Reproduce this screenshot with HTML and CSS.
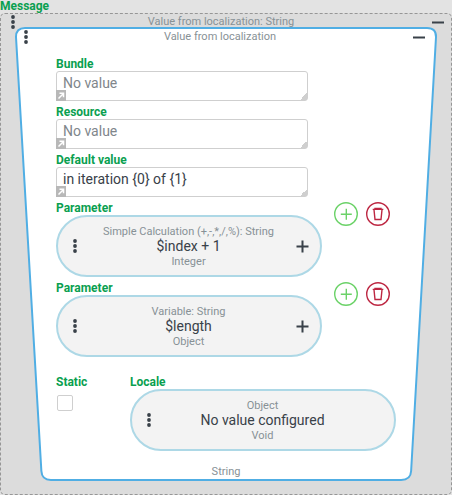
FILE: index.html
```html
<!DOCTYPE html>
<html lang="en">
<head>
    <meta charset="UTF-8">
    <meta name="viewport" content="width=device-width, initial-scale=1.0">
    <title>Message</title>
    <link rel="stylesheet" href="styles.css">
</head>
<body>

    <!-- Shared icons -->
    <svg class="sprite" aria-hidden="true">
        <symbol id="dots" viewBox="0 0 4 14">
            <circle cx="2" cy="2" r="1.9"/>
            <circle cx="2" cy="7" r="1.9"/>
            <circle cx="2" cy="12" r="1.9"/>
        </symbol>
        <symbol id="minus" viewBox="0 0 14 14">
            <path d="M1 7.500h12"/>
        </symbol>
        <symbol id="plus" viewBox="0 0 14 14">
            <path d="M1.500 7.500h12M7.500 1.500v12"/>
        </symbol>
        <symbol id="add" viewBox="0 0 24 24">
            <circle cx="12" cy="12" r="11.3"/>
            <path d="M12.300 6.700v11M6.800 12.200h11"/>
        </symbol>
        <symbol id="trash" viewBox="0 0 24 24">
            <circle cx="12" cy="12" r="11.3"/>
            <path d="M6.700 7.400h10.600M9 7V6.400h6V7M8 7.800l1 9.700h6l1-9.700"/>
        </symbol>
        <symbol id="open" viewBox="0 0 10 11">
            <path d="M2.500 8.500L7 4M3.500 3.200h4v4"/>
        </symbol>
    </svg>

    <div class="label">Message</div>
    <div class="slot">
        <div class="slot-header">
            <button class="icon-button" type="button" aria-label="Menu"><svg class="dots"><use href="#dots"/></svg></button>
            <span class="hint">Value from localization: String</span>
            <button class="icon-button" type="button" aria-label="Collapse"><svg class="sign"><use href="#minus"/></svg></button>
        </div>

        <div class="block">
            <svg class="block-shape" viewBox="0 0 424 454" preserveAspectRatio="none" aria-hidden="true">
                <path d="M10 1H414Q423.300 1 423 10L398 444Q397.500 453 388 453H36Q27 453 26.500 444L1 10Q1 1 10 1Z"/>
            </svg>

            <div class="block-header">
                <button class="icon-button" type="button" aria-label="Menu"><svg class="dots"><use href="#dots"/></svg></button>
                <span class="hint">Value from localization</span>
                <button class="icon-button" type="button" aria-label="Collapse"><svg class="sign"><use href="#minus"/></svg></button>
            </div>

            <div class="fields">
                <div class="field">
                    <label class="label" for="bundle">Bundle</label>
                    <div class="text-box">
                        <textarea id="bundle" rows="1" placeholder="No value"></textarea>
                        <svg class="open"><use href="#open"/></svg>
                    </div>
                </div>
                <div class="field">
                    <label class="label" for="resource">Resource</label>
                    <div class="text-box">
                        <textarea id="resource" rows="1" placeholder="No value"></textarea>
                        <svg class="open"><use href="#open"/></svg>
                    </div>
                </div>
                <div class="field">
                    <label class="label" for="default-value">Default value</label>
                    <div class="text-box">
                        <textarea id="default-value" rows="1">in iteration {0} of {1}</textarea>
                        <svg class="open"><use href="#open"/></svg>
                    </div>
                </div>

                <div class="parameter">
                    <div class="field">
                        <div class="label">Parameter</div>
                        <div class="pill">
                            <button class="icon-button" type="button" aria-label="Menu"><svg class="dots"><use href="#dots"/></svg></button>
                            <div class="pill-text">
                                <span class="hint">Simple Calculation (+,-,*,/,%): String</span>
                                <span class="value">$index + 1</span>
                                <span class="hint">Integer</span>
                            </div>
                            <button class="icon-button" type="button" aria-label="Expand"><svg class="sign"><use href="#plus"/></svg></button>
                        </div>
                    </div>
                    <div class="actions">
                        <button class="round add" type="button" aria-label="Add parameter"><svg><use href="#add"/></svg></button>
                        <button class="round remove" type="button" aria-label="Remove parameter"><svg><use href="#trash"/></svg></button>
                    </div>
                </div>

                <div class="parameter">
                    <div class="field">
                        <div class="label">Parameter</div>
                        <div class="pill">
                            <button class="icon-button" type="button" aria-label="Menu"><svg class="dots"><use href="#dots"/></svg></button>
                            <div class="pill-text">
                                <span class="hint">Variable: String</span>
                                <span class="value">$length</span>
                                <span class="hint">Object</span>
                            </div>
                            <button class="icon-button" type="button" aria-label="Expand"><svg class="sign"><use href="#plus"/></svg></button>
                        </div>
                    </div>
                    <div class="actions">
                        <button class="round add" type="button" aria-label="Add parameter"><svg><use href="#add"/></svg></button>
                        <button class="round remove" type="button" aria-label="Remove parameter"><svg><use href="#trash"/></svg></button>
                    </div>
                </div>

                <div class="options">
                    <div class="static">
                        <label class="label" for="static">Static</label>
                        <input type="checkbox" id="static">
                    </div>
                    <div class="field">
                        <div class="label">Locale</div>
                        <div class="pill">
                            <button class="icon-button" type="button" aria-label="Menu"><svg class="dots"><use href="#dots"/></svg></button>
                            <div class="pill-text">
                                <span class="hint">Object</span>
                                <span class="value">No value configured</span>
                                <span class="hint">Void</span>
                            </div>
                            <span class="spacer"></span>
                        </div>
                    </div>
                </div>
            </div>

            <div class="block-footer hint">String</div>
        </div>
    </div>

</body>
</html>
```

FILE: styles.css
```css
* {
    box-sizing: border-box;
}
body {
    margin: 0;
    background: #e3e3e3;
    color: #394149;
    font-family: Roboto, sans-serif;
    font-size: 14px;
}
button {
    padding: 0;
    border: none;
    background: none;
    color: inherit;
    cursor: pointer;
}
svg {
    display: block;
    fill: none;
    stroke: currentColor;
}
.sprite {
    display: none;
}
.label {
    display: block;
    height: 16px;
    color: #0a9f50;
    font-size: 12px;
    font-weight: bold;
    line-height: 19px;
}
.hint {
    color: #879196;
    font-size: 11px;
    line-height: 14px;
}

/* Outer slot */
body > .label {
    height: 13px;
    line-height: 12px;
}
.slot {
    padding-bottom: 13px;
    border: 1px dashed #969696;
    border-radius: 5px;
    background: #dcdcdc;
}
.slot-header, .block-header {
    display: flex;
    justify-content: space-between;
}
.slot-header {
    height: 13px;
    padding: 1px 6px 0 10px;
}
.slot-header .hint {
    padding-right: 4px;
}
.icon-button {
    display: flex;
    flex: none;
    align-items: center;
}
.slot-header .icon-button, .block-header .icon-button {
    height: 14px;
}
.dots {
    width: 4px;
    height: 14px;
    fill: currentColor;
    stroke: none;
}
.sign {
    width: 14px;
    height: 14px;
    stroke-width: 2;
}

/* Inner block */
.block {
    position: relative;
    margin: 0 14px;
}
.block-shape {
    position: absolute;
    inset: 0;
    width: 100%;
    height: 100%;
    overflow: visible;
    fill: #fff;
    stroke: #50aee4;
    stroke-width: 2;
}
.block-header, .fields, .block-footer {
    position: relative;
}
.block-header {
    height: 28px;
    padding: 3px 11px 0 9px;
}
.block-footer {
    padding: 12px 0 2px;
    text-align: center;
}

/* Fields */
.fields {
    padding: 0 41px;
}
.field {
    width: 266px;
    margin-bottom: 2px;
}
.text-box {
    position: relative;
    width: 252px;
    height: 30px;
}
textarea {
    display: block;
    width: 100%;
    height: 30px;
    padding: 2px 6px;
    border: 1px solid #cfcfcf;
    border-radius: 3px;
    background: #fff linear-gradient(135deg, transparent 50%, #cfcfcf 50%) no-repeat right bottom / 7px 7px;
    color: inherit;
    font: inherit;
    line-height: 18px;
    resize: none;
    overflow: hidden;
}
textarea::placeholder {
    color: #80868b;
}
.open {
    position: absolute;
    left: 0;
    bottom: 0;
    width: 10px;
    height: 11px;
    background: #b8b8b8;
    color: #fff;
    stroke-width: 1.5;
}
.parameter, .options {
    display: flex;
}
.pill {
    display: flex;
    align-items: center;
    justify-content: space-between;
    height: 62px;
    padding: 0 11px 0 15px;
    border: 2px solid #add8e6;
    border-radius: 31px;
    background: #f3f3f3;
}
.pill-text {
    display: flex;
    flex-direction: column;
    align-items: center;
    padding: 2px 0 0 5px;
}
.pill-text .value {
    padding-bottom: 2px;
    line-height: 14px;
}
.spacer {
    width: 14px;
}

/* Round action buttons */
.actions {
    display: flex;
    gap: 8px;
    padding: 3px 0 0 12px;
}
.round {
    width: 24px;
    height: 24px;
    border-radius: 50%;
}
.round svg {
    width: 24px;
    height: 24px;
    stroke-width: 1.4;
}
.add {
    color: #6bd268;
}
.remove {
    color: #bd2742;
}

.options {
    padding-top: 14px;
}
.static {
    width: 74px;
}
input[type="checkbox"] {
    display: block;
    width: 16px;
    height: 16px;
    margin: 6px 1px;
    border: 1px solid #cfcfcf;
    border-radius: 2px;
    background: #fff;
    appearance: none;
}
input[type="checkbox"]:checked {
    background: #50aee4;
}
```
